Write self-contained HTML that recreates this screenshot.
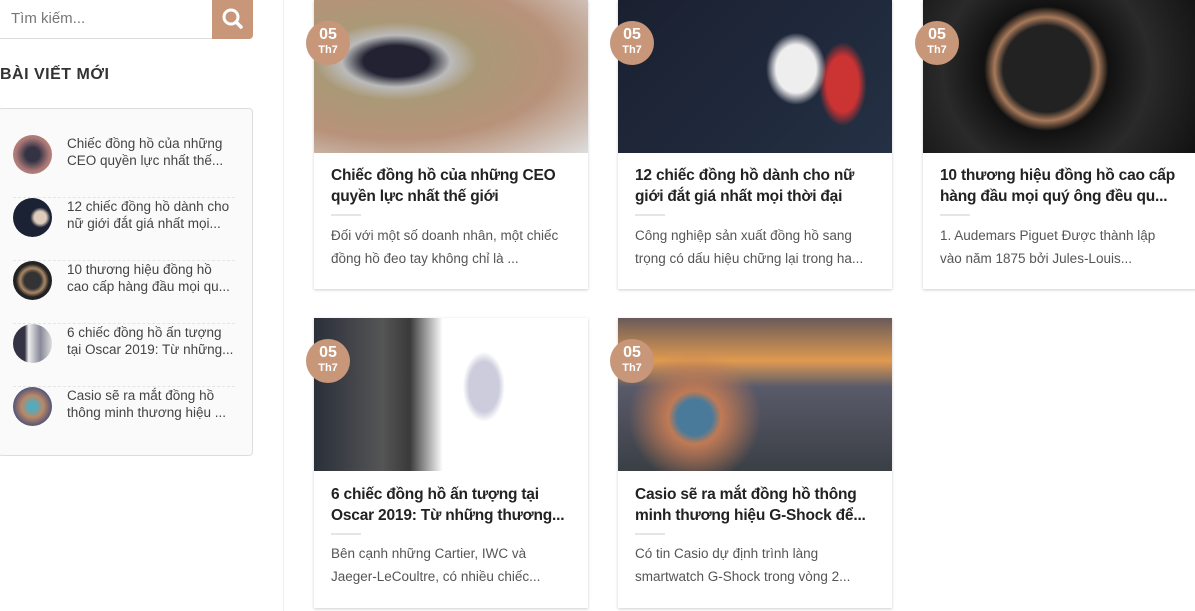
<!DOCTYPE html>
<html><head><meta charset="utf-8"><style>
*{box-sizing:border-box;margin:0;padding:0}
body{width:1195px;height:611px;overflow:hidden;background:#fff;font-family:"Liberation Sans",sans-serif;position:relative}
.search{position:absolute;left:-2px;top:-2px;width:255px;height:41px;border:1px solid #ddd;border-radius:0 0 4px 0;background:#fff}
.search span{position:absolute;left:12px;top:11px;font-size:15px;color:#777}
.sbtn{position:absolute;right:-1px;top:-1px;width:41px;height:41px;background:#c8977a;border-radius:0 0 4px 0}
.title{position:absolute;left:0;top:66px;font-size:16px;font-weight:bold;color:#333;letter-spacing:.5px}
.box{position:absolute;left:-2px;top:108px;width:255px;height:348px;border:1px solid #ddd;border-radius:4px;background:#fafafa}
.it{position:absolute;left:14px;width:222px;height:63px;border-bottom:1px dashed #e5e5e5}
.it .av{position:absolute;left:0;top:0;width:39px;height:39px;border-radius:50%}
.it p{position:absolute;left:54px;top:0;font-size:13.5px;line-height:17px;color:#444;width:168px;height:34px;overflow:hidden}
.vl{position:absolute;left:283px;top:0;width:1px;height:611px;background:#eee}
.card{position:absolute;width:274px;background:#fff;box-shadow:0 1px 3px rgba(0,0,0,.2)}
.img{position:absolute;left:0;top:0;width:100%;height:153px}
.date{position:absolute;left:-8px;top:21px;width:44px;height:44px;border-radius:50%;background:#c8977a;color:#fff;text-align:center;font-weight:bold}
.date b{display:block;font-size:16px;line-height:18px;margin-top:5px}
.date i{display:block;font-style:normal;font-size:11px;line-height:13px}
.h{position:absolute;left:17px;font-size:15.5px;font-weight:bold;line-height:21px;color:#222;width:245px;height:42px;overflow:hidden;letter-spacing:-.2px}
.ln{position:absolute;left:17px;width:30px;height:2px;background:#e5e5e5}
.d{position:absolute;left:17px;font-size:13.5px;line-height:23px;color:#555;width:240px;height:46px;overflow:hidden}
</style></head><body>
<div class="search"><span>Tìm kiếm...</span><div class="sbtn"><svg width="41" height="41"><circle cx="19" cy="19" r="7" fill="none" stroke="#fff" stroke-width="3"/><line x1="24" y1="24" x2="29" y2="29" stroke="#fff" stroke-width="3.5" stroke-linecap="round"/></svg></div></div>
<div class="title">BÀI VIẾT MỚI</div>
<div class="box">
<div class="it" style="top:26px"><div class="av" style="background:radial-gradient(circle,#334 25%,#a77 60%,#c97)"></div><p>Chiếc đồng hồ của những CEO quyền lực nhất thế...</p></div>
<div class="it" style="top:89px"><div class="av" style="background:radial-gradient(circle at 70% 50%,#dcb 18%,#1b2233 30%)"></div><p>12 chiếc đồng hồ dành cho nữ giới đắt giá nhất mọi...</p></div>
<div class="it" style="top:152px"><div class="av" style="background:radial-gradient(circle,#333 30%,#a86 45%,#222 60%)"></div><p>10 thương hiệu đồng hồ cao cấp hàng đầu mọi qu...</p></div>
<div class="it" style="top:215px"><div class="av" style="background:linear-gradient(90deg,#334 30%,#eee 40%,#889 70%,#ddd)"></div><p>6 chiếc đồng hồ ấn tượng tại Oscar 2019: Từ những...</p></div>
<div class="it" style="top:278px;border:none"><div class="av" style="background:radial-gradient(circle,#5ab 15%,#b86 40%,#557 70%)"></div><p>Casio sẽ ra mắt đồng hồ thông minh thương hiệu ...</p></div>
</div>
<div class="vl"></div>

<div class="card" style="left:314px;top:0;height:289px"><div class="img" style="background:radial-gradient(ellipse at 30% 40%,#223 12%,#bbb 20%,#a97 30%,#b8927a 60%,#ddd)"></div><div class="date"><b>05</b><i>Th7</i></div><div class="h" style="top:165px">Chiếc đồng hồ của những CEO quyền lực nhất thế giới</div><div class="ln" style="top:214px"></div><div class="d" style="top:224px">Đối với một số doanh nhân, một chiếc đồng hồ đeo tay không chỉ là ...</div></div>

<div class="card" style="left:618px;top:0;height:289px"><div class="img" style="background:radial-gradient(ellipse 50px 60px at 65% 45%,#eee 40%,transparent 60%),radial-gradient(ellipse 40px 70px at 82% 55%,#c33 40%,transparent 60%),linear-gradient(135deg,#1a2030,#243044)"></div><div class="date"><b>05</b><i>Th7</i></div><div class="h" style="top:165px">12 chiếc đồng hồ dành cho nữ giới đắt giá nhất mọi thời đại</div><div class="ln" style="top:214px"></div><div class="d" style="top:224px">Công nghiệp sản xuất đồng hồ sang trọng có dấu hiệu chững lại trong ha...</div></div>

<div class="card" style="left:923px;top:0;height:289px"><div class="img" style="background:radial-gradient(circle at 45% 45%,#222 25%,#a7795a 30%,#111 36%,#2a2a2a 60%,#111)"></div><div class="date"><b>05</b><i>Th7</i></div><div class="h" style="top:165px">10 thương hiệu đồng hồ cao cấp hàng đầu mọi quý ông đều qu...</div><div class="ln" style="top:214px"></div><div class="d" style="top:224px">1. Audemars Piguet Được thành lập vào năm 1875 bởi Jules-Louis...</div></div>

<div class="card" style="left:314px;top:318px;height:290px"><div class="img" style="background:radial-gradient(ellipse 30px 50px at 62% 45%,#ccd 50%,transparent 70%),linear-gradient(90deg,#2a2f3a 0,#555 25%,#3a3a3a 35%,#fff 47%,#fff 100%)"></div><div class="date"><b>05</b><i>Th7</i></div><div class="h" style="top:166px">6 chiếc đồng hồ ấn tượng tại Oscar 2019: Từ những thương...</div><div class="ln" style="top:215px"></div><div class="d" style="top:224px">Bên cạnh những Cartier, IWC và Jaeger-LeCoultre, có nhiều chiếc...</div></div>

<div class="card" style="left:618px;top:318px;height:290px"><div class="img" style="background:radial-gradient(circle at 28% 65%,#4a7a9a 8%,#c07a55 12%,transparent 30%),linear-gradient(180deg,#6a5a5a 0,#e09a50 28%,#5a5a6a 45%,#3a3f45 100%)"></div><div class="date"><b>05</b><i>Th7</i></div><div class="h" style="top:166px">Casio sẽ ra mắt đồng hồ thông minh thương hiệu G-Shock để...</div><div class="ln" style="top:215px"></div><div class="d" style="top:224px">Có tin Casio dự định trình làng smartwatch G-Shock trong vòng 2...</div></div>
</body></html>
